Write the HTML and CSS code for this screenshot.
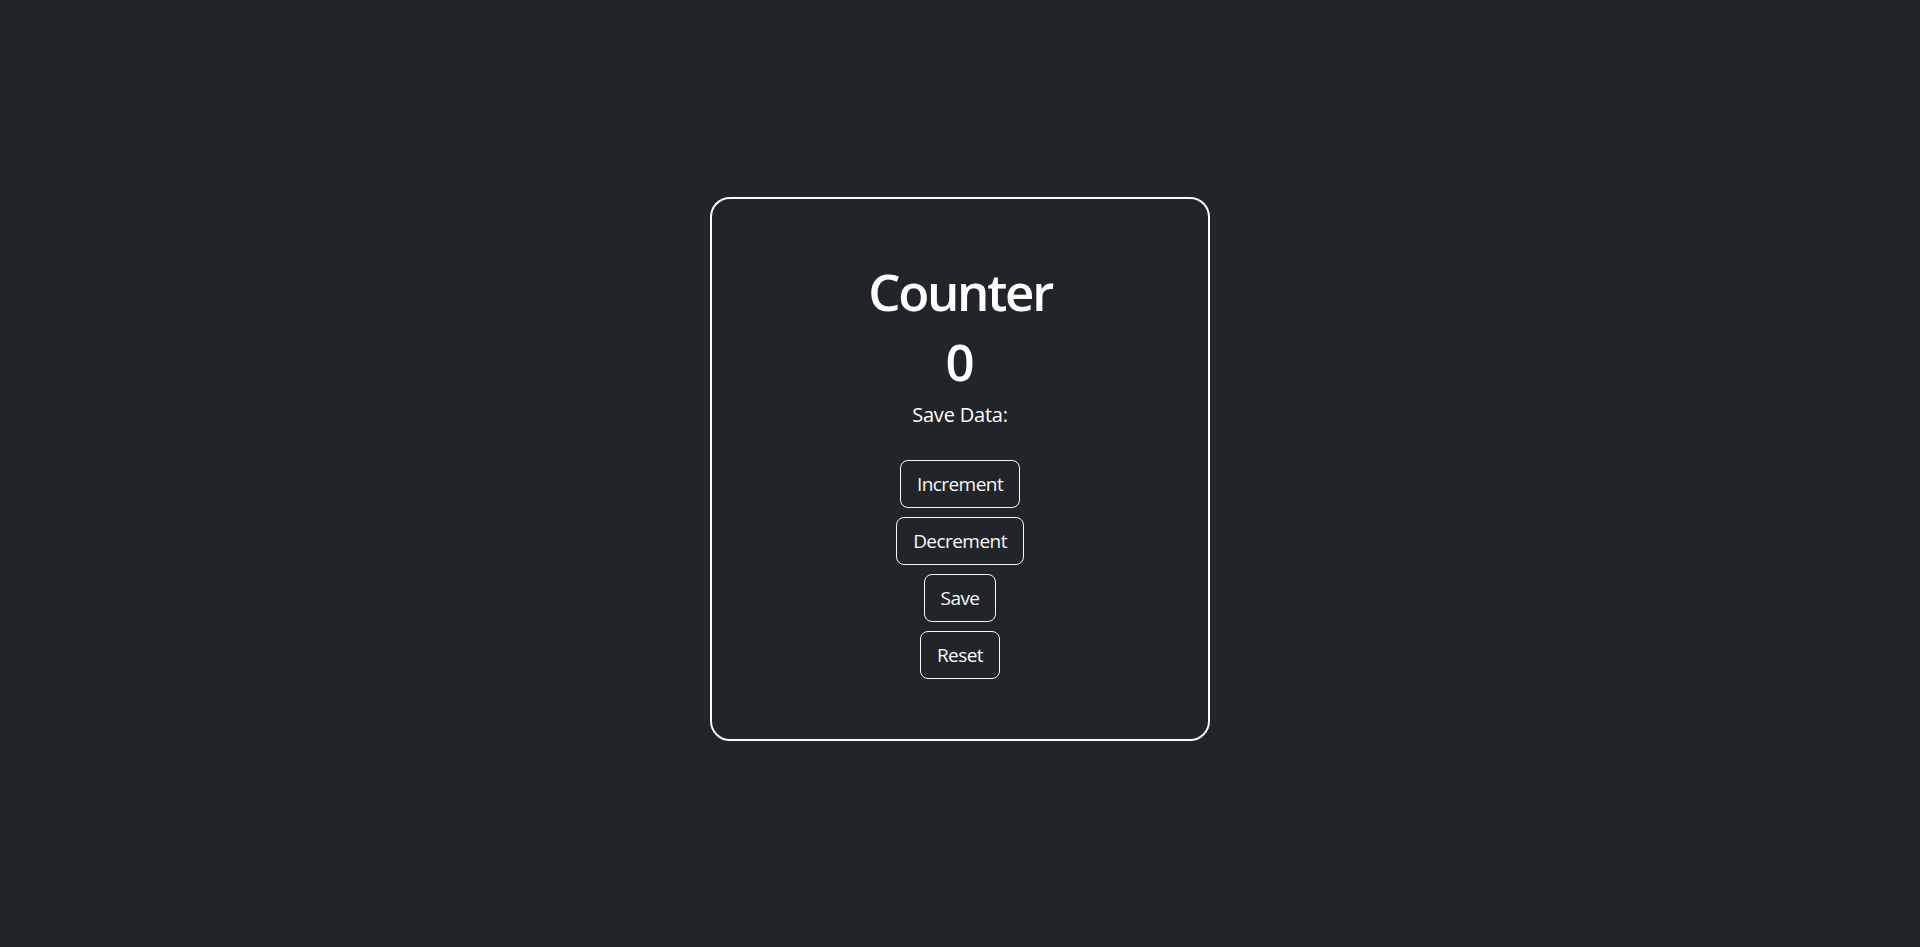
FILE: index.html
```html
<!DOCTYPE html>
<html lang="en">
<head>
<meta charset="utf-8">
<title>Counter</title>
<link rel="stylesheet" href="styles.css">
</head>
<body>
<main class="page">
  <section class="card">
    <h1 class="title">Counter</h1>
    <h1 class="count">0</h1>
    <p class="save-data">Save Data:</p>
    <div class="actions">
      <button class="btn" type="button">Increment</button>
      <button class="btn" type="button">Decrement</button>
      <button class="btn" type="button">Save</button>
      <button class="btn" type="button">Reset</button>
    </div>
  </section>
</main>
</body>
</html>
```

FILE: styles.css
```css
* { box-sizing: border-box; }
html, body { margin: 0; padding: 0; }
body {
  background: #212529;
  color: #fff;
  font-family: "Open Sans", "Noto Sans", sans-serif;
}
.page {
  min-height: 100vh;
  display: flex;
  align-items: center;
  justify-content: center;
  padding-bottom: 9px;
}
.card {
  width: 500px;
  border: 2px solid #f8f9fa;
  border-radius: 20px;
  background: #212529;
  padding: 61px 20px 60px;
  display: flex;
  flex-direction: column;
  align-items: center;
  text-align: center;
}
.title, .count {
  margin: 0 0 8px;
  font-size: 51px;
  line-height: 62px;
  font-weight: 600;
  letter-spacing: -2.3px;
}
.count {
  letter-spacing: 0;
}
.save-data {
  margin: 0 0 30px;
  font-size: 20px;
  line-height: 30px;
  letter-spacing: -0.2px;
}
.actions {
  display: flex;
  flex-direction: column;
  align-items: center;
  gap: 9.33px;
}
.btn {
  font-family: inherit;
  font-size: 19px;
  line-height: 30px;
  letter-spacing: -0.55px;
  padding: 8px 16px;
  color: #f8f9fa;
  background: transparent;
  border: 1px solid #f8f9fa;
  border-radius: 8px;
  cursor: pointer;
}
```
